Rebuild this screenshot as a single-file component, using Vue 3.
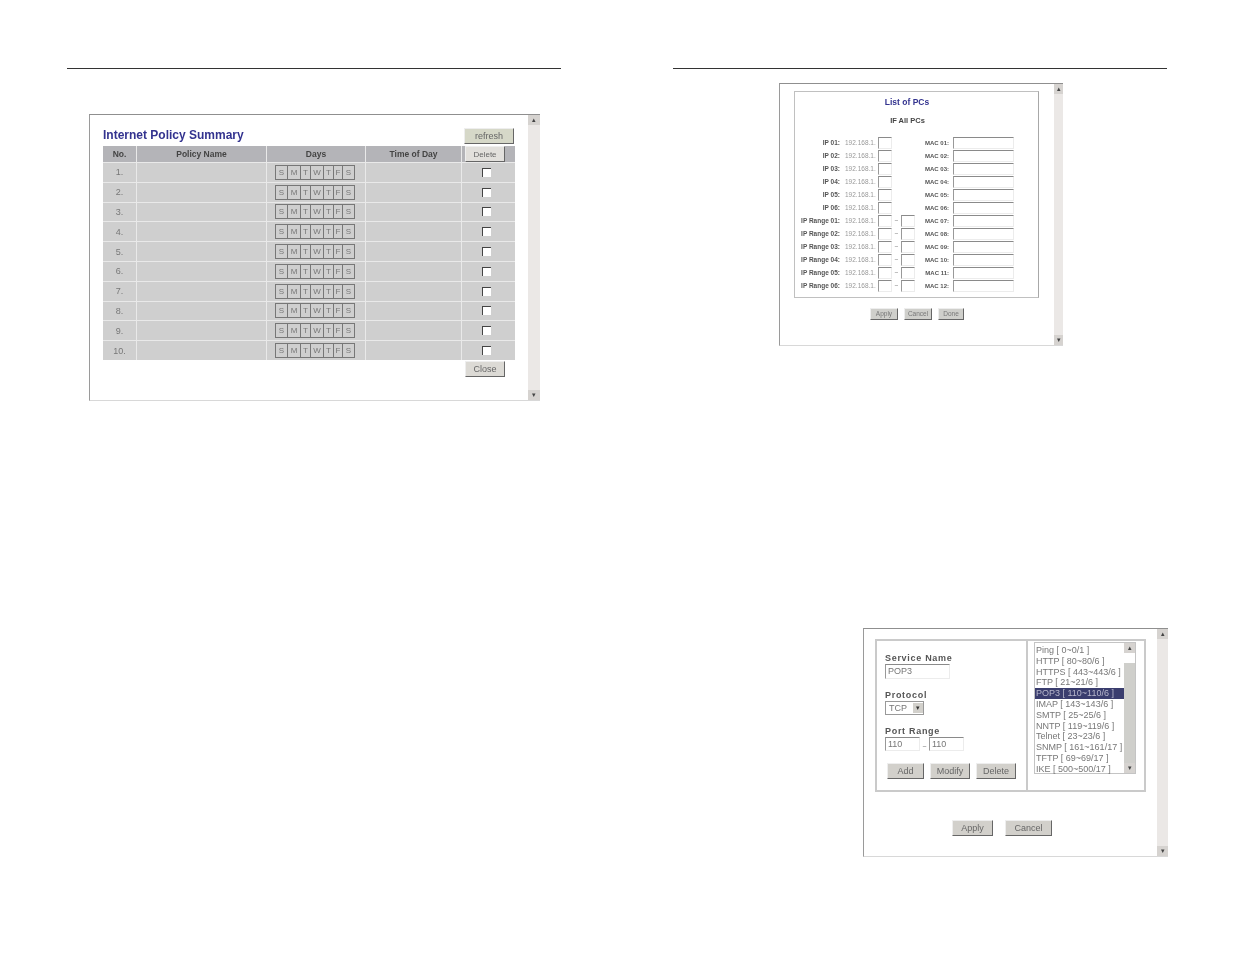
<script setup>
const days = ['S', 'M', 'T', 'W', 'T', 'F', 'S']
const rows = ['1.', '2.', '3.', '4.', '5.', '6.', '7.', '8.', '9.', '10.']
const ipRows = [
  { label: 'IP 01:', range: false, mac: 'MAC 01:' },
  { label: 'IP 02:', range: false, mac: 'MAC 02:' },
  { label: 'IP 03:', range: false, mac: 'MAC 03:' },
  { label: 'IP 04:', range: false, mac: 'MAC 04:' },
  { label: 'IP 05:', range: false, mac: 'MAC 05:' },
  { label: 'IP 06:', range: false, mac: 'MAC 06:' },
  { label: 'IP Range 01:', range: true, mac: 'MAC 07:' },
  { label: 'IP Range 02:', range: true, mac: 'MAC 08:' },
  { label: 'IP Range 03:', range: true, mac: 'MAC 09:' },
  { label: 'IP Range 04:', range: true, mac: 'MAC 10:' },
  { label: 'IP Range 05:', range: true, mac: 'MAC 11:' },
  { label: 'IP Range 06:', range: true, mac: 'MAC 12:' }
]
const services = [
  'Ping [ 0~0/1 ]', 'HTTP [ 80~80/6 ]', 'HTTPS [ 443~443/6 ]', 'FTP [ 21~21/6 ]',
  'POP3 [ 110~110/6 ]', 'IMAP [ 143~143/6 ]', 'SMTP [ 25~25/6 ]', 'NNTP [ 119~119/6 ]',
  'Telnet [ 23~23/6 ]', 'SNMP [ 161~161/17 ]', 'TFTP [ 69~69/17 ]', 'IKE [ 500~500/17 ]'
]
</script>

<template>
  <div class="page">
    <section class="leaf leaf-left">
      <div class="rule"></div>
      <div class="win win-policy">
        <div class="policy-body">
          <div class="policy-head">
            <h1 class="policy-title">Internet Policy Summary</h1>
            <button class="btn btn-refresh">refresh</button>
          </div>
          <div class="ptable">
            <div class="pcell phead">No.</div>
            <div class="pcell phead">Policy Name</div>
            <div class="pcell phead">Days</div>
            <div class="pcell phead">Time of Day</div>
            <div class="pcell phead pdel"><button class="btn btn-delete">Delete</button></div>
            <template v-for="r in rows" :key="r">
              <div class="pcell pnum">{{ r }}</div>
              <div class="pcell"></div>
              <div class="pcell pdays">
                <div class="days"><span v-for="(d, i) in days" :key="i" class="day" :class="'day-' + d">{{ d }}</span></div>
              </div>
              <div class="pcell"></div>
              <div class="pcell pchk"><span class="check"></span></div>
            </template>
          </div>
          <div class="policy-foot"><button class="btn btn-close">Close</button></div>
        </div>
        <div class="sbar sbar-policy"><span class="arrow">▴</span><span class="arrow">▾</span></div>
      </div>
    </section>

    <section class="leaf leaf-right">
      <div class="rule"></div>
      <div class="win win-pcs">
        <div class="pcs-body">
          <div class="pcs-box">
            <div class="pcs-title">List of PCs</div>
            <div class="pcs-all">IF All PCs</div>
            <div class="pcs-rows">
              <div v-for="row in ipRows" :key="row.label" class="pcs-row">
                <span class="pcs-label">{{ row.label }}</span>
                <span class="pcs-ip">192.168.1.</span>
                <span class="field field-ip"></span>
                <template v-if="row.range">
                  <span class="pcs-tilde">~</span>
                  <span class="field field-ip"></span>
                </template>
                <span class="pcs-spacer"></span>
                <span class="pcs-mac">{{ row.mac }}</span>
                <span class="field field-mac"></span>
              </div>
            </div>
          </div>
          <div class="pcs-actions">
            <button class="btn btn-sm">Apply</button>
            <button class="btn btn-sm">Cancel</button>
            <button class="btn btn-sm btn-done">Done</button>
          </div>
        </div>
        <div class="sbar sbar-pcs"><span class="arrow">▴</span><span class="arrow">▾</span></div>
      </div>

      <div class="win win-svc">
        <div class="svc-body">
          <div class="svc-box">
            <div class="svc-left">
              <div class="svc-label">Service Name</div>
              <div class="field svc-name">POP3</div>
              <div class="svc-label svc-gap">Protocol</div>
              <div class="svc-select"><span>TCP</span><span class="svc-plus">▾</span></div>
              <div class="svc-label svc-gap">Port Range</div>
              <div class="svc-ports">
                <span class="field svc-port">110</span>
                <span class="svc-tilde">~</span>
                <span class="field svc-port">110</span>
              </div>
              <div class="svc-btns">
                <button class="btn btn-svc b-add">Add</button>
                <button class="btn btn-svc b-mod">Modify</button>
                <button class="btn btn-svc b-del">Delete</button>
              </div>
            </div>
            <div class="svc-right">
              <div class="svc-list">
                <div class="svc-items">
                  <div v-for="s in services" :key="s" class="svc-item" :class="{ sel: s.startsWith('POP3') }">{{ s }}</div>
                </div>
                <div class="svc-scroll"><span class="arrow">▴</span><span class="svc-thumb"></span><span class="arrow">▾</span></div>
              </div>
            </div>
          </div>
          <div class="svc-actions">
            <button class="btn btn-svc b-apply">Apply</button>
            <button class="btn btn-svc b-cancel">Cancel</button>
          </div>
        </div>
        <div class="sbar sbar-svc"><span class="arrow">▴</span><span class="arrow">▾</span></div>
      </div>
    </section>
  </div>
</template>

<style scoped>
.page {
  display: flex;
  width: 1235px;
  height: 954px;
  overflow: hidden;
  background: #fff;
  font-family: "Liberation Sans", Arial, sans-serif;
  color: #555;
}
.leaf { box-sizing: border-box; padding-top: 68px; }
.leaf-left { width: 606px; padding-left: 67px; }
.leaf-right { width: 629px; padding-left: 67px; }
.rule { width: 494px; height: 1px; background: #333; }

.win {
  display: flex;
  box-sizing: border-box;
  background: #fff;
  border-top: 1px solid #8f8f8f;
  border-left: 1px solid #9a9a9a;
  border-bottom: 1px solid #d8d8d8;
  filter: blur(0.6px);
}
.sbar {
  display: flex;
  flex-direction: column;
  justify-content: space-between;
  background: #ebe8e6;
  flex: none;
}
.arrow {
  display: block;
  height: 10px;
  line-height: 10px;
  text-align: center;
  font-size: 7px;
  color: #444;
  background: #d6d3d0;
}

.btn {
  display: block;
  box-sizing: border-box;
  margin: 0;
  padding: 0;
  font-family: inherit;
  color: #666;
  background: #d2d0cb;
  border: 1px solid;
  border-color: #eee #666 #666 #eee;
}

/* Policy window */
.win-policy { margin: 45px 0 0 22px; width: 451px; height: 287px; }
.policy-body { flex: 1; padding: 13px 13px 0 13px; }
.policy-head { display: flex; justify-content: space-between; align-items: flex-start; height: 18px; padding-right: 1px; }
.policy-title { margin: 0; font-size: 12px; line-height: 14px; font-weight: 700; color: #33338f; }
.btn-refresh { width: 50px; height: 16px; font-size: 9px; background: #d6d8c8; }
.ptable {
  display: grid;
  grid-template-columns: 33px 129px 98px 95px 53px;
  grid-template-rows: 16px;
  grid-auto-rows: 18.8px;
  gap: 1px;
  width: 412px;
  background: #e9e9e9;
}
.pcell {
  display: flex;
  align-items: center;
  justify-content: center;
  background: #cfcfcf;
  font-size: 8.5px;
}
.phead { background: #b4b4b8; font-weight: 700; color: #444; }
.pdel { justify-content: flex-start; padding-left: 3px; }
.btn-delete { width: 40px; height: 16px; font-size: 8px; background: #e2e0dc; }
.pnum { font-size: 9px; color: #777; }
.pdays { padding-right: 2px; }
.pchk { padding-right: 5px; }
.days { display: flex; border: 1px solid #777; height: 13px; }
.day {
  display: flex;
  align-items: center;
  justify-content: center;
  width: 11px;
  font-size: 8px;
  color: #777;
  border-left: 1px solid #777;
}
.day:first-child { border-left: 0; }
.day-M, .day-W { width: 12px; }
.day-T { width: 9px; }
.day-F { width: 8px; }
.check {
  width: 8px;
  height: 8px;
  background: #fff;
  border-top: 1px solid #444;
  border-left: 1px solid #444;
}
.policy-foot { display: flex; justify-content: flex-end; padding: 1px 10px 0 0; }
.btn-close { width: 40px; height: 16px; font-size: 9px; background: #dcdad5; }
.sbar-policy { width: 12px; }

/* PCs window */
.win-pcs { margin: 14px 0 0 106px; width: 284px; height: 263px; }
.pcs-body { flex: 1; padding: 7px 15px 0 14px; }
.pcs-box {
  box-sizing: border-box;
  width: 245px;
  height: 207px;
  border: 1px solid #c0c0c0;
  border-right-color: #a8a8a8;
  padding-top: 5px;
}
.pcs-title { text-align: center; font-size: 8.5px; font-weight: 700; color: #33338f; line-height: 11px; padding-right: 19px; }
.pcs-all { text-align: center; font-size: 7.5px; font-weight: 700; line-height: 10px; margin-top: 8px; padding-right: 18px; color: #444; }
.pcs-rows { margin-top: 10px; }
.pcs-row { display: flex; align-items: center; height: 13px; font-size: 6.5px; }
.pcs-label { width: 45px; text-align: right; font-weight: 700; color: #555; white-space: nowrap; }
.pcs-ip { width: 33px; margin-left: 5px; color: #999; white-space: nowrap; }
.field {
  display: block;
  box-sizing: border-box;
  background: #fff;
  border-top: 1px solid #8a8a8a;
  border-left: 1px solid #999;
  border-right: 1px solid #ececec;
  border-bottom: 1px solid #ececec;
}
.field-ip { width: 14px; height: 12px; }
.pcs-tilde { width: 9px; text-align: center; color: #888; }
.pcs-spacer { flex: 1; }
.pcs-mac { font-size: 6px; font-weight: 700; color: #555; width: 28px; text-align: right; margin-right: 4px; white-space: nowrap; }
.field-mac { width: 61px; height: 12px; margin-right: 24px; }
.pcs-actions { display: flex; gap: 6px; margin: 10px 0 0 76px; }
.btn-sm { width: 28px; height: 12px; font-size: 6.5px; line-height: 10px; background: #cfcfcb; color: #777; }
.btn-done { width: 26px; }
.sbar-pcs { width: 9px; }

/* Service window */
.win-svc { margin: 282px 0 0 190px; width: 305px; height: 229px; }
.svc-body { flex: 1; padding: 10px 11px 0 11px; }
.svc-box {
  display: flex;
  box-sizing: border-box;
  width: 271px;
  height: 153px;
  border: 2px solid #cacaca;
}
.svc-left { box-sizing: border-box; width: 151px; padding: 12px 0 0 8px; border-right: 2px solid #cacaca; }
.svc-right { flex: 1; padding: 1px 0 0 6px; }
.svc-label { font-size: 9px; line-height: 10px; font-weight: 700; letter-spacing: 0.7px; color: #555; margin-bottom: 1px; }
.svc-gap { margin-top: 11px; }
.svc-name { width: 65px; height: 15px; font-size: 9px; line-height: 13px; padding-left: 2px; color: #777; }
.svc-select {
  display: flex;
  justify-content: space-between;
  align-items: center;
  box-sizing: border-box;
  width: 39px;
  height: 14px;
  padding-left: 3px;
  font-size: 9px;
  color: #777;
  border: 1px solid #999;
}
.svc-plus { width: 10px; height: 10px; line-height: 10px; font-size: 7px; text-align: center; background: #d2d0cb; color: #333; }
.svc-ports { display: flex; align-items: flex-end; }
.svc-port { width: 35px; height: 14px; font-size: 9px; line-height: 12px; padding-left: 2px; color: #777; }
.svc-tilde { width: 9px; font-size: 7px; line-height: 8px; text-align: center; color: #777; }
.svc-btns { display: flex; gap: 6px; margin: 12px 0 0 2px; }
.btn-svc { height: 16px; font-size: 9px; }
.b-add { width: 37px; }
.b-mod { width: 40px; }
.b-del { width: 40px; }
.svc-list { display: flex; box-sizing: border-box; width: 102px; height: 132px; border: 1px solid #c4c4c4; }
.svc-items { flex: 1; padding-top: 2px; min-width: 0; }
.svc-item { height: 10.8px; line-height: 10.8px; font-size: 9px; color: #777; white-space: nowrap; padding-left: 1px; }
.svc-item.sel { background: #3a3d6e; color: #b8b8cc; }
.svc-scroll { display: flex; flex-direction: column; justify-content: space-between; width: 11px; background: #fff; }
.svc-thumb { flex: 1; background: #cfcfcb; margin: 10px 0 0; }
.svc-actions { display: flex; gap: 12px; margin: 28px 0 0 77px; }
.b-apply { width: 41px; }
.b-cancel { width: 47px; }
.sbar-svc { width: 11px; }
</style>
